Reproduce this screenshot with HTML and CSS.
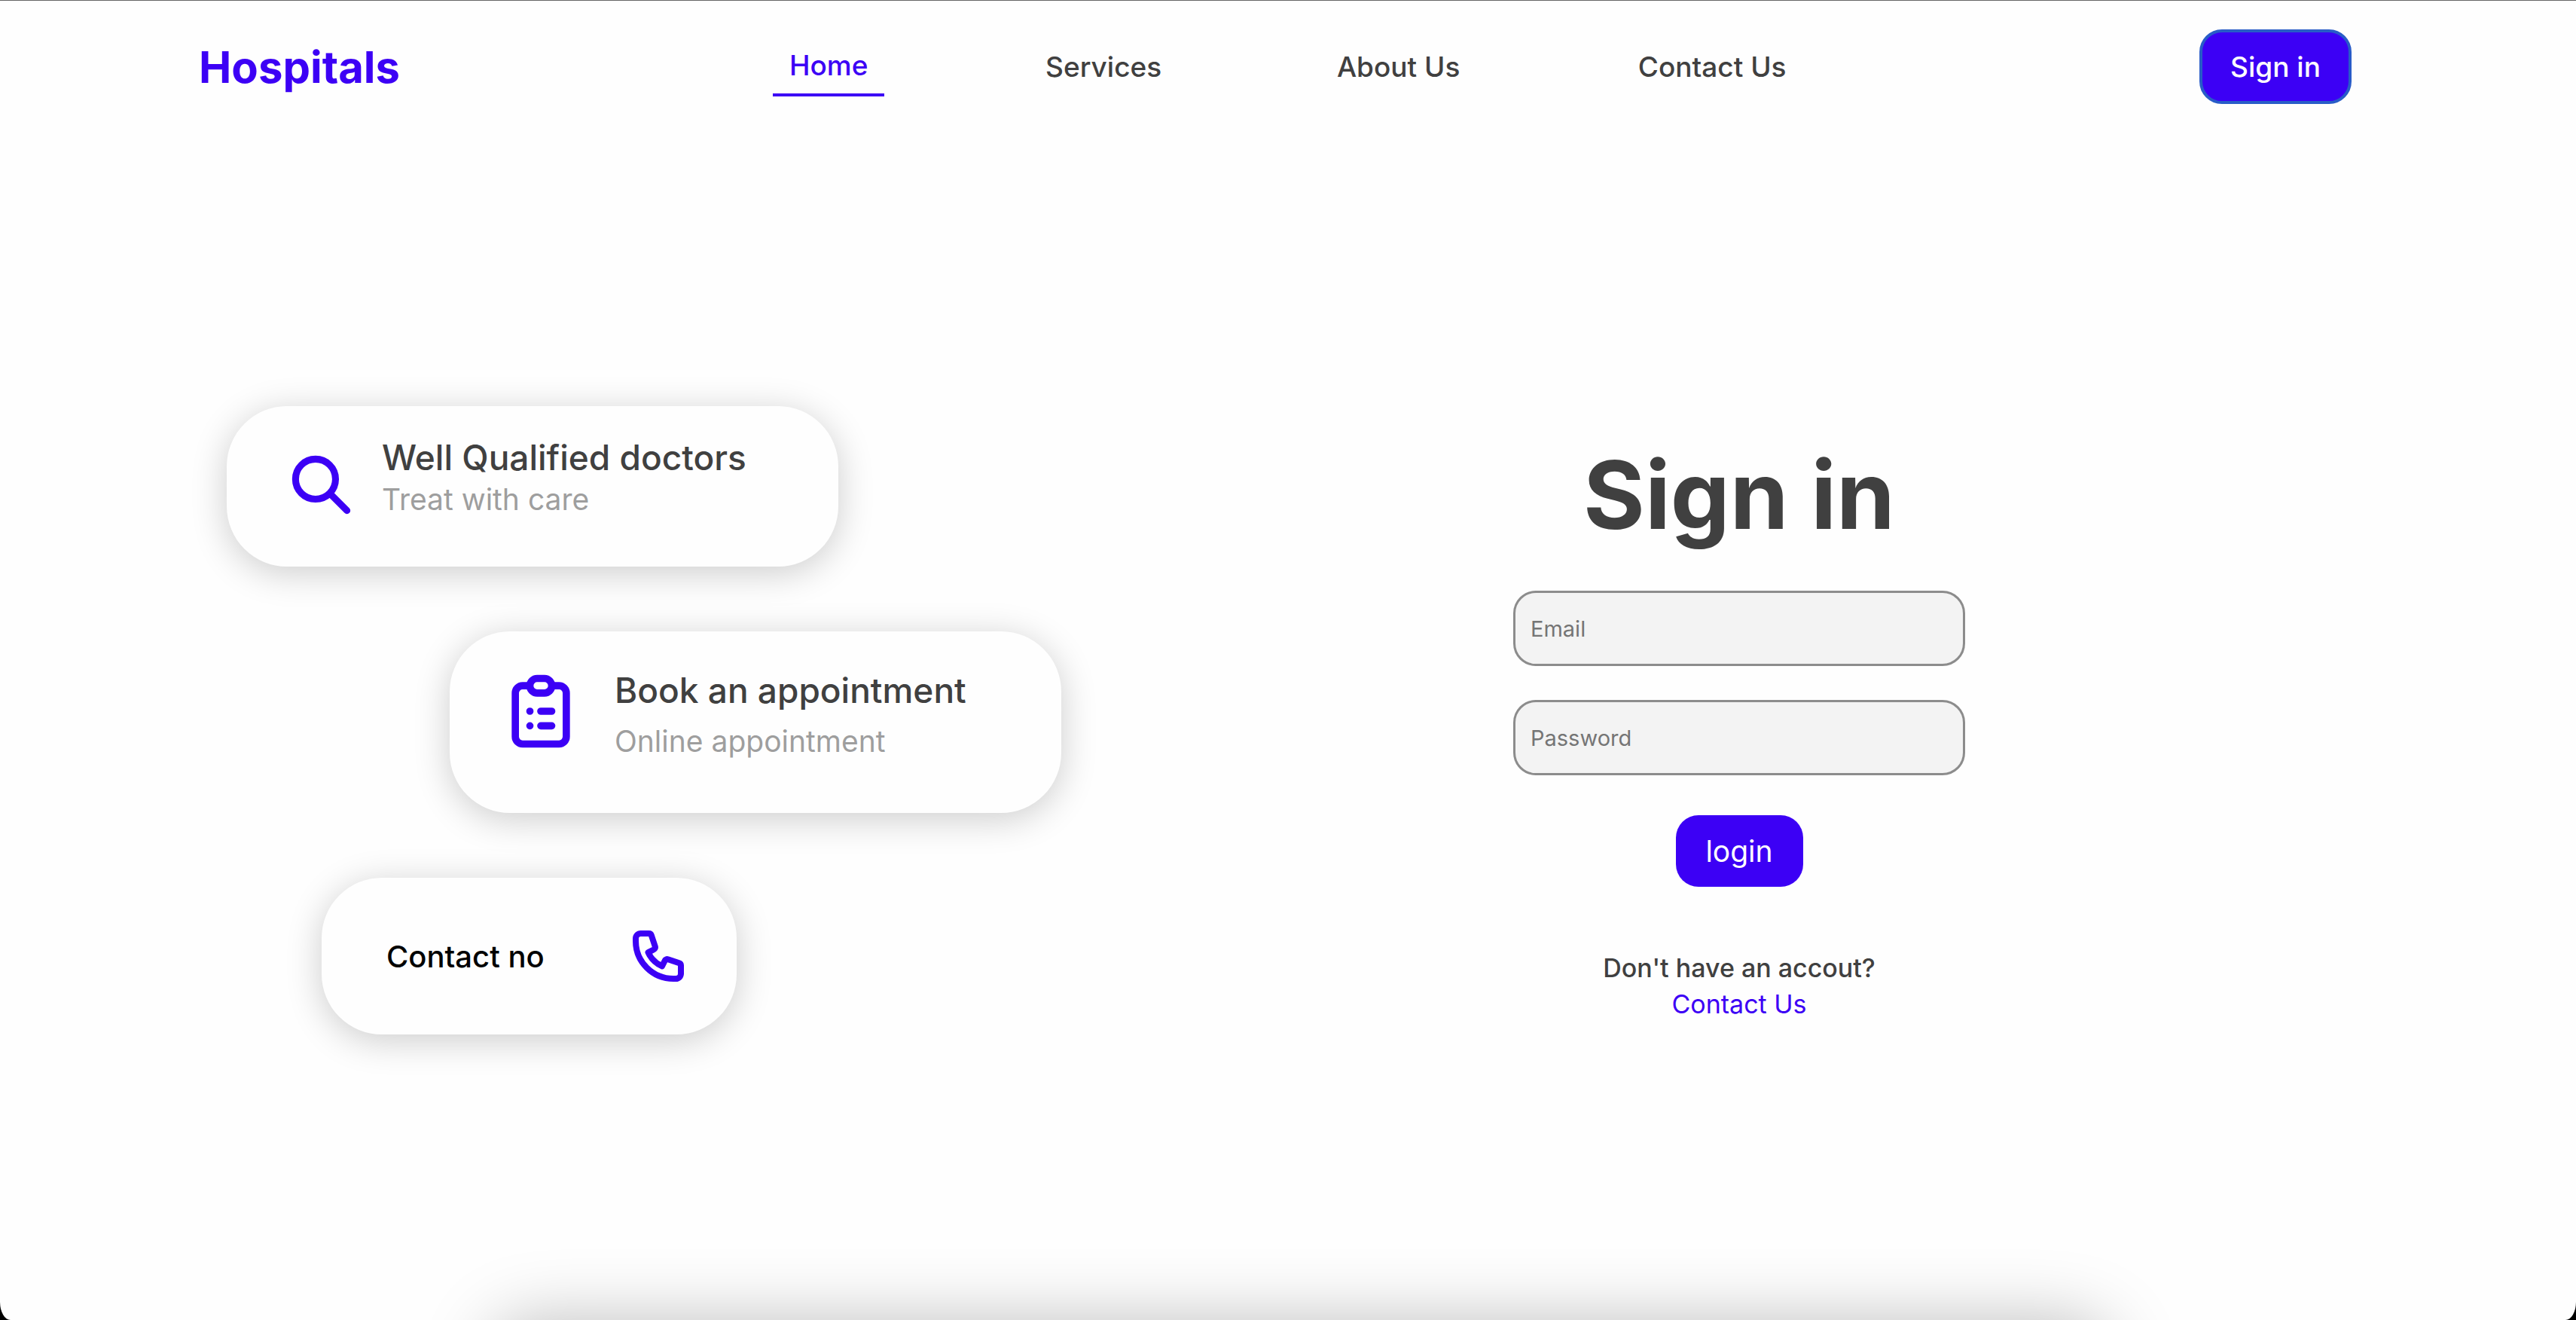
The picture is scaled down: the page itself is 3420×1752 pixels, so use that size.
FILE: index.html
```html
<!DOCTYPE html>
<html lang="en">
<head>
  <meta charset="utf-8">
  <meta name="viewport" content="width=device-width, initial-scale=1">
  <title>Hospitals</title>
  <link rel="stylesheet" href="styles.css">
</head>
<body>
  <div class="page">
    <header class="header">
      <a class="logo" href="#">Hospitals</a>
      <nav class="nav">
        <a class="nav-link nav-link-active" href="#">Home</a>
        <a class="nav-link" href="#">Services</a>
        <a class="nav-link" href="#">About Us</a>
        <a class="nav-link" href="#">Contact Us</a>
      </nav>
      <button class="button button-outlined" type="button">Sign in</button>
    </header>

    <main class="main">
      <section class="cards">
        <article class="card card-doctors">
          <svg class="icon icon-search" viewBox="0 0 24 24" aria-hidden="true">
            <path d="M21 21l-6-6m2-5a7 7 0 11-14 0 7 7 0 0114 0z"/>
          </svg>
          <div class="card-text">
            <h2 class="card-title">Well Qualified doctors</h2>
            <p class="card-note">Treat with care</p>
          </div>
        </article>

        <article class="card card-booking">
          <svg class="icon icon-clipboard" viewBox="0 0 24 24" aria-hidden="true">
            <path d="M9 5H7a2 2 0 00-2 2v12a2 2 0 002 2h10a2 2 0 002-2V7a2 2 0 00-2-2h-2M9 5a2 2 0 002 2h2a2 2 0 002-2M9 5a2 2 0 012-2h2a2 2 0 012 2m-3 7h3m-3 4h3m-6-4h.01M9 16h.01"/>
          </svg>
          <div class="card-text card-text-spaced">
            <h2 class="card-title">Book an appointment</h2>
            <p class="card-note">Online appointment</p>
          </div>
        </article>

        <article class="card card-contact">
          <p class="card-label">Contact no</p>
          <svg class="icon icon-phone" viewBox="0 0 24 24" aria-hidden="true">
            <path d="M3 5a2 2 0 012-2h3.28a1 1 0 01.948.684l1.498 4.493a1 1 0 01-.502 1.21l-2.257 1.13a11.042 11.042 0 005.516 5.516l1.13-2.257a1 1 0 011.21-.502l4.493 1.498a1 1 0 01.684.949V19a2 2 0 01-2 2h-1C9.716 21 3 14.284 3 6V5z"/>
          </svg>
        </article>
      </section>

      <form class="form">
        <h1 class="form-title">Sign in</h1>
        <div class="fields">
          <input class="field" type="email" placeholder="Email" aria-label="Email">
          <input class="field" type="password" placeholder="Password" aria-label="Password">
        </div>
        <button class="button button-login" type="submit">login</button>
        <p class="form-note">Don't have an accout?</p>
        <a class="form-link" href="#">Contact Us</a>
      </form>
    </main>

    <div class="next-panel" aria-hidden="true"></div>
  </div>
</body>
</html>
```
FILE: styles.css
```css
* {
  box-sizing: border-box;
}

html {
  background: #000;
}

body {
  margin: 0;
  font-family: Inter, "Liberation Sans", sans-serif;
  color: #404040;
}

h1, h2, p {
  margin: 0;
}

a {
  color: inherit;
  text-decoration: none;
}

.page {
  position: relative;
  min-height: 100vh;
  overflow: hidden;
  background: #fefefe;
  border-radius: 0 0 14px 14px / 0 0 24px 24px;
}

/* Header */

.header {
  display: grid;
  grid-template-columns: 762fr 1367fr 729fr;
  align-items: center;
  min-height: 176px;
  padding: 0 298px 0 264px;
  border-top: 1px solid #666;
}

.logo {
  font-size: 58px;
  font-weight: 700;
  color: #3c00f5;
}

.nav {
  display: grid;
  grid-template-columns: 148fr 189fr 201fr 239fr;
  column-gap: 196px;
  align-items: center;
}

.nav-link {
  padding: 10px 0;
  font-size: 37px;
  font-weight: 500;
  line-height: 55px;
  text-align: center;
  white-space: nowrap;
}

.nav-link-active {
  color: #3c00f5;
  border-bottom: 4px solid #3c00f5;
}

.button {
  font-family: inherit;
  color: #fff;
  background: #3c00f5;
  border: 0;
  border-radius: 30px;
  cursor: pointer;
}

.button-outlined {
  justify-self: end;
  width: 202px;
  height: 99px;
  padding: 0;
  font-size: 37px;
  font-weight: 500;
  border: 4px solid #285cc8;
}

/* Cards and form */

.main {
  display: grid;
  grid-template-columns: 1108fr 1800fr;
  padding: 363px 211px 100px 301px;
}

.cards {
  display: flex;
  flex-direction: column;
  gap: 86px;
}

.card {
  display: flex;
  width: 812px;
  border-radius: 80px;
  box-shadow: 0 8px 48px rgba(0, 0, 0, 0.2);
}

.card-doctors {
  gap: 35px;
  min-height: 213px;
  padding: 38px 80px 42px;
}

.card-booking {
  align-self: flex-end;
  gap: 40px;
  min-height: 241px;
  padding: 48px 63px;
}

.card-contact {
  align-items: center;
  justify-content: space-between;
  width: 551px;
  min-height: 208px;
  margin-left: 126px;
  padding: 0 64px 0 86px;
}

.icon {
  flex: none;
  fill: none;
  stroke: #3c00f5;
  stroke-width: 2.4;
  stroke-linecap: round;
  stroke-linejoin: round;
}

.icon-search {
  align-self: center;
  width: 91px;
  height: 91px;
}

.icon-clipboard {
  width: 116px;
  height: 116px;
  stroke-width: 2;
}

.icon-phone {
  width: 80px;
  height: 80px;
}

.card-text {
  display: flex;
  flex-direction: column;
}

.card-text-spaced {
  gap: 12px;
}

.card-title {
  font-size: 46px;
  font-weight: 500;
  line-height: 60px;
  white-space: nowrap;
}

.card-note {
  font-size: 39px;
  line-height: 52px;
  color: #9e9e9e;
}

.card-label {
  font-size: 40px;
  font-weight: 500;
  color: #000;
}

.form {
  display: flex;
  flex-direction: column;
  align-items: center;
  padding-top: 43px;
}

.form-title {
  font-size: 125px;
  font-weight: 700;
  line-height: 150px;
}

.fields {
  display: flex;
  flex-direction: column;
  gap: 45px;
  margin: 52px 0 53px;
}

.field {
  width: 600px;
  height: 100px;
  padding: 0 20px;
  font-family: inherit;
  font-size: 29px;
  color: #404040;
  background: #f3f3f3;
  border: 3px solid #8c8c8c;
  border-radius: 30px;
}

.field::placeholder {
  color: #757575;
}

.button-login {
  width: 169px;
  height: 95px;
  padding: 0;
  font-size: 39px;
}

.form-note {
  margin-top: 84px;
  font-size: 34px;
  font-weight: 500;
  line-height: 48px;
}

.form-link {
  font-size: 34px;
  line-height: 48px;
  color: #3c00f5;
}

/* Top edge of the panel below the fold; only its shadow shows */

.next-panel {
  position: absolute;
  right: 18%;
  bottom: -300px;
  left: 19%;
  height: 300px;
  border-radius: 60px;
  box-shadow: 0 0 90px rgba(0, 0, 0, 0.25);
}

@media (max-width: 2400px) {
  .header {
    grid-template-columns: auto 1fr auto;
    gap: 40px;
    padding: 0 40px;
  }

  .nav {
    grid-template-columns: repeat(4, auto);
    column-gap: 20px;
  }

  .main {
    grid-template-columns: 1fr;
    gap: 100px;
    padding: 100px 40px;
  }
}
```
